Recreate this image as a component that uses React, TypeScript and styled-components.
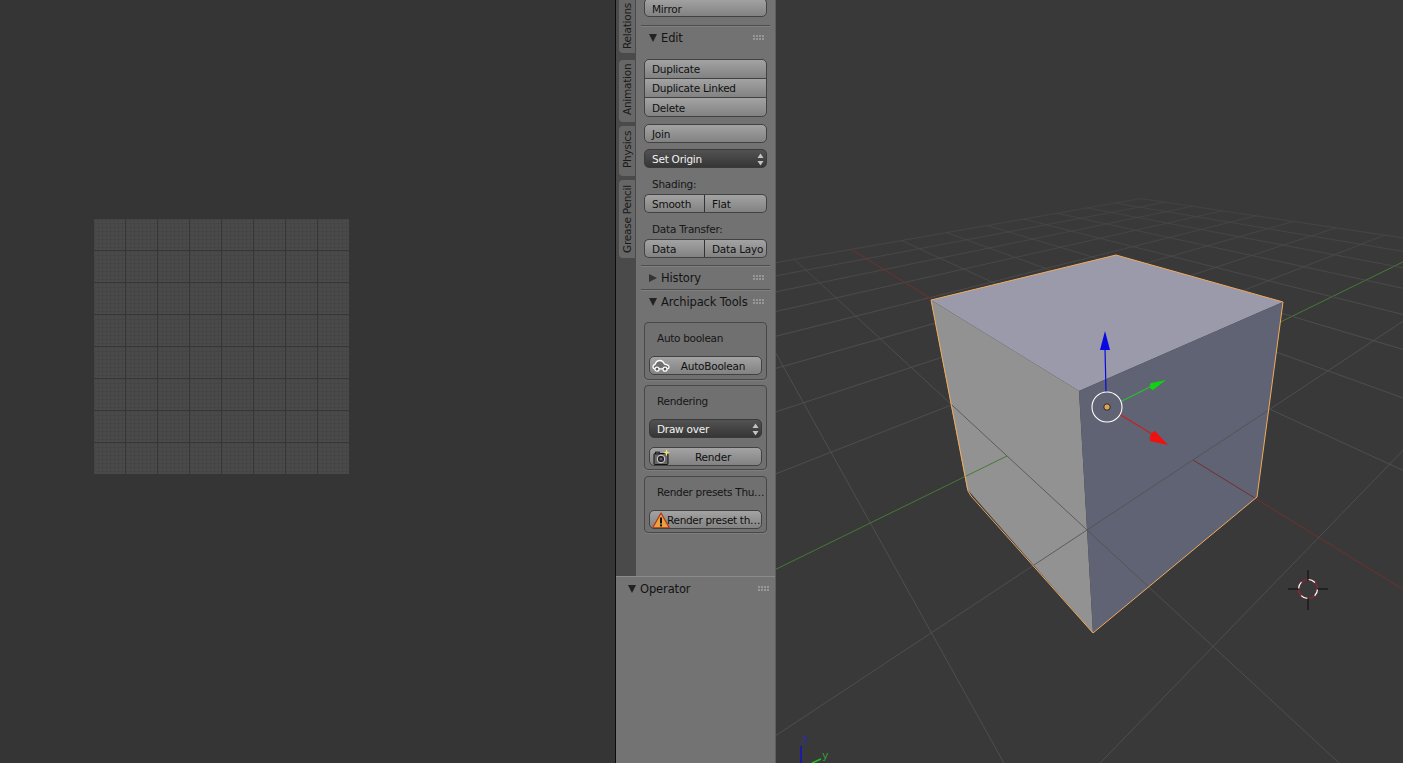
import React, { useMemo } from "react";
import styled, { createGlobalStyle } from "styled-components";

const Global = createGlobalStyle`
  html, body { margin: 0; padding: 0; background: #393939; overflow: hidden; }
  #root { width: 1403px; height: 763px; }
`;

const Screen = styled.div`
  display: flex;
  width: 1403px;
  height: 763px;
  overflow: hidden;
  font-family: "DejaVu Sans", sans-serif;
  font-size: 10.5px;
  letter-spacing: -0.24px;
  color: #101010;
`;

const UvEditor = styled.section`
  width: 616px;
  height: 763px;
  flex: none;
  box-sizing: border-box;
  padding: 219px 0 0 94px;
  background: #353535;
  border-right: 1px solid #0c0c0c;
`;

const UvGrid = styled.div`
  width: 255px;
  height: 255px;
  background-color: #4a4a4a;
  background-image:
    linear-gradient(to right, #373737 1px, transparent 1px),
    linear-gradient(to bottom, #373737 1px, transparent 1px),
    linear-gradient(to right, #454545 1px, transparent 1px),
    linear-gradient(to bottom, #454545 1px, transparent 1px);
  background-size: 32px 32px, 32px 32px, 4px 4px, 4px 4px;
  background-position: 31px 31px, 31px 31px, 0 0, 0 0;
`;

const ToolShelf = styled.aside`
  width: 160px;
  height: 763px;
  flex: none;
  display: flex;
  flex-direction: column;
  background: #727272;
  border-right: 1px solid #5e5e5e;
  box-sizing: border-box;
`;

const Upper = styled.div`
  height: 577px;
  flex: none;
  display: flex;
  overflow: hidden;
`;

const TabColumn = styled.nav`
  width: 20px;
  flex: none;
  background: #4a4a4a;
  box-sizing: border-box;
  padding: 0 1px 0 3px;
  display: flex;
  flex-direction: column;
  align-items: stretch;
  overflow: hidden;
`;

const Tab = styled.div<{ $h: number; $top: number; $lift?: number }>`
  height: ${(p) => p.$h}px;
  margin-top: ${(p) => p.$top}px;
  padding-top: ${(p) => p.$lift ?? 0}px;
  box-sizing: border-box;
  flex: none;
  writing-mode: vertical-rl;
  transform: rotate(180deg);
  display: flex;
  align-items: center;
  justify-content: center;
  background: #676767;
  border-radius: 0 4px 4px 0;
  color: #1a1a1a;
  line-height: 16px;
  white-space: nowrap;
`;

const Scroll = styled.div`
  flex: 1;
  box-sizing: border-box;
  padding: 0 5px;
  overflow: hidden;
`;

const Inner = styled.div<{ $top: number }>`
  margin: ${(p) => p.$top}px 3px 0;
`;

const Divider = styled.div<{ $top?: number }>`
  height: 1px;
  margin-top: ${(p) => p.$top ?? 0}px;
  background: #4e4e4e;
  box-shadow: 0 1px 0 #808080;
`;

const PanelHeader = styled.header<{ $pad?: number; $h?: number }>`
  height: ${(p) => p.$h ?? 24}px;
  display: flex;
  align-items: center;
  gap: 4px;
  padding: 0 5px 0 ${(p) => p.$pad ?? 8}px;
  font-size: 11.5px;
  letter-spacing: -0.13px;
  color: #141414;
`;

const Disclosure = styled.span<{ $open?: boolean }>`
  width: 0;
  height: 0;
  flex: none;
  ${(p) =>
    p.$open
      ? `border-left: 4.5px solid transparent; border-right: 4.5px solid transparent; border-top: 8px solid #222;`
      : `border-top: 4.5px solid transparent; border-bottom: 4.5px solid transparent; border-left: 8px solid #333; margin-right: 0;`}
`;

const HeaderTitle = styled.span`
  flex: 1;
  white-space: nowrap;
`;

const Grip = styled.span`
  width: 12px;
  height: 6px;
  flex: none;
  background-image: radial-gradient(circle at 1px 1px, #b8b8b8 0.7px, transparent 1px);
  background-size: 3px 3px;
  opacity: 0.55;
`;

const Button = styled.div<{ $top?: number; $h?: number }>`
  height: ${(p) => p.$h ?? 19}px;
  margin-top: ${(p) => p.$top ?? 0}px;
  box-sizing: border-box;
  display: flex;
  align-items: center;
  padding: 1px 7px 0;
  border: 1px solid #424242;
  border-radius: 5px;
  background: linear-gradient(#a3a3a3, #828282);
  white-space: nowrap;
  overflow: hidden;
`;

const ClippedButton = styled(Button)`
  padding-top: 3px;
`;

const Stack = styled.div<{ $top: number }>`
  margin-top: ${(p) => p.$top}px;
  display: flex;
  flex-direction: column;
`;

const StackButton = styled(Button)`
  border-radius: 0;
  margin-top: -1px;
  height: 20px;
  padding-top: 0;
  &:first-child { border-radius: 5px 5px 0 0; margin-top: 0; }
  &:last-child { border-radius: 0 0 5px 5px; padding-top: 2px; }
`;

const Split = styled.div<{ $top: number }>`
  margin-top: ${(p) => p.$top}px;
  display: grid;
  grid-template-columns: 60px 1fr;
`;

const SplitButton = styled(Button)`
  border-radius: 0;
  &:first-child { border-radius: 5px 0 0 5px; border-right: none; }
  &:last-child { border-radius: 0 5px 5px 0; border-left: 1px solid #333; padding-right: 0; }
`;

const Select = styled(Button)`
  background: linear-gradient(#525252, #363636);
  border-color: #3a3a3a;
  color: #f2f2f2;
  justify-content: space-between;
  padding-right: 2px;
`;

const Updown = styled.svg`
  width: 7px;
  height: 13px;
  flex: none;
`;

const Label = styled.div<{ $top: number }>`
  margin-top: ${(p) => p.$top}px;
  height: 15px;
  line-height: 15px;
  padding-left: 8px;
  white-space: nowrap;
  color: #161616;
`;

const Box = styled.div<{ $top: number; $h: number }>`
  margin-top: ${(p) => p.$top}px;
  height: ${(p) => p.$h}px;
  box-sizing: border-box;
  border: 1px solid #484848;
  border-radius: 4px;
  background: #707070;
  padding: 0 4px;
  box-shadow: 0 1px 0 #7e7e7e;
`;

const BoxLabel = styled.div<{ $top: number }>`
  margin-top: ${(p) => p.$top}px;
  height: 15px;
  line-height: 15px;
  padding-left: 8px;
  white-space: nowrap;
  letter-spacing: -0.3px;
  color: #161616;
`;

const IconButton = styled(Button)`
  padding: 1px 2px 0 2px;
`;

const IconSlot = styled.svg`
  width: 18px;
  height: 17px;
  flex: none;
`;

const CenterText = styled.span`
  flex: 1;
  text-align: center;
  padding-right: 3px;
`;

const TightText = styled.span`
  flex: 1;
  white-space: nowrap;
  margin-left: -3px;
  letter-spacing: -0.32px;
`;

const Operator = styled.section`
  flex: 1;
  background: #737373;
  border-top: 1px solid #8a8a8a;
  margin-top: -1px;
`;

const Viewport = styled.main`
  flex: 1;
  height: 763px;
  background: #393939;
  overflow: hidden;
`;

const Drawing = styled.svg`
  display: block;
  width: 627px;
  height: 763px;
`;

const AxisLetter = styled.text<{ $c: string }>`
  font-family: "DejaVu Sans", sans-serif;
  font-size: 11px;
  letter-spacing: 0;
  fill: ${(p) => p.$c};
`;

const O = [1107, 407];
const A = [-102.5, -19.7];
const B = [235.3, 12.3];
const G = -0.158;
const H = 0.1344;

const project = (u: number, v: number) => {
  const w = 1 + G * u + H * v;
  return [(A[0] * u + B[0] * v + O[0]) / w, (A[1] * u + B[1] * v + O[1]) / w];
};

type Seg = { a: [number, number]; b: [number, number]; c: string; axis: boolean };

const seg = (a: [number, number], b: [number, number], c: string, axis: boolean): Seg | null => {
  const wa = 1 + G * a[0] + H * a[1];
  const wb = 1 + G * b[0] + H * b[1];
  const min = 0.04;
  if (wa < min && wb < min) return null;
  let p = a;
  let q = b;
  const t = (min - wa) / (wb - wa);
  const cut: [number, number] = [a[0] + (b[0] - a[0]) * t, a[1] + (b[1] - a[1]) * t];
  if (wa < min) p = cut;
  if (wb < min) q = cut;
  return { a: p, b: q, c, axis };
};

const GRID = "url(#gridFade)";
const RED = "#732f2f";
const GREEN = "#467a32";

function buildGrid() {
  const back: (Seg | null)[] = [];
  const front: (Seg | null)[] = [];
  for (let i = -8; i <= 8; i++) {
    const ax = i === 0;
    const cu = ax ? GREEN : GRID;
    const cv = ax ? RED : GRID;
    if (i >= 1) front.push(seg([i, -8], [i, 8], cu, ax));
    else {
      front.push(seg([i, -8], [i, -1], cu, ax));
      back.push(seg([i, ax ? 1 : -1], [i, 8], cu, ax));
    }
    if (i <= -1) front.push(seg([-8, i], [8, i], cv, ax));
    else {
      front.push(seg([1, i], [8, i], cv, ax));
      back.push(seg([-8, i], [ax ? -1 : 1, i], cv, ax));
    }
  }
  return { back: back.filter(Boolean) as Seg[], front: front.filter(Boolean) as Seg[] };
}

const Lines = ({ items }: { items: Seg[] }) => (
  <>
    {items.map((s, k) => {
      const p = project(s.a[0], s.a[1]);
      const q = project(s.b[0], s.b[1]);
      return (
        <line key={k} x1={p[0]} y1={p[1]} x2={q[0]} y2={q[1]} stroke={s.c} strokeWidth={s.axis ? 1 : 0.85} />
      );
    })}
  </>
);

const CarIcon = () => (
  <IconSlot viewBox="0 0 18 17">
    <path
      d="M1 8.5 C1 7.2 1.8 6.8 3 6.4 C4 3.8 5.8 2.5 8 2.5 C10.2 2.5 11.6 4.2 12.6 6.2 C14.8 6.6 17 7.2 17 9 C17 10.2 16.2 10.8 15.4 10.8 L2.6 10.8 C1.6 10.8 1 10 1 8.5 Z"
      fill="#6f6f6f"
      stroke="#fff"
      strokeWidth="1.3"
    />
    <circle cx="5" cy="11.2" r="2" fill="#5a5a5a" stroke="#fff" strokeWidth="1.2" />
    <circle cx="13" cy="11.2" r="2" fill="#5a5a5a" stroke="#fff" strokeWidth="1.2" />
  </IconSlot>
);

const CameraIcon = () => (
  <IconSlot viewBox="0 0 18 17">
    <rect x="2" y="4.5" width="14" height="11" rx="1" fill="#676767" stroke="#111" />
    <rect x="3.5" y="3" width="4" height="2" fill="#555" stroke="#111" strokeWidth="0.7" />
    <circle cx="9" cy="10" r="3.8" fill="#222" stroke="#d8d8d8" />
    <circle cx="9" cy="10" r="1.6" fill="#6d5a78" />
    <path d="M14.5 0 L15.4 3 L18 3.8 L15.4 4.6 L14.5 7.6 L13.6 4.6 L11 3.8 L13.6 3 Z" fill="#f7e66e" />
  </IconSlot>
);

const WarningIcon = () => (
  <IconSlot viewBox="0 0 18 17">
    <path d="M9 1 L17.3 15.8 L0.7 15.8 Z" fill="#e8a33a" stroke="#b8321e" strokeWidth="1.2" strokeLinejoin="round" />
    <rect x="8" y="5.5" width="2" height="6" fill="#111" />
    <rect x="8" y="12.4" width="2" height="2" fill="#111" />
  </IconSlot>
);

const Arrows = () => (
  <Updown viewBox="0 0 7 13">
    <path d="M3.5 0.5 L6.5 5 L0.5 5 Z" fill="#c4c4c4" />
    <path d="M3.5 12.5 L6.5 8 L0.5 8 Z" fill="#c4c4c4" />
  </Updown>
);

export default function App() {
  const grid = useMemo(buildGrid, []);
  return (
    <Screen>
      <Global />
      <UvEditor>
        <UvGrid />
      </UvEditor>
      <ToolShelf>
        <Upper>
          <TabColumn>
            <Tab $h={55} $top={-2}>Relations</Tab>
            <Tab $h={62} $top={7} $lift={3}>Animation</Tab>
            <Tab $h={50} $top={4} $lift={3}>Physics</Tab>
            <Tab $h={78} $top={4}>Grease Pencil</Tab>
          </TabColumn>
          <Scroll>
            <Inner $top={-2}>
              <ClippedButton>Mirror</ClippedButton>
            </Inner>
            <Divider $top={8} />
            <PanelHeader>
              <Disclosure $open />
              <HeaderTitle>Edit</HeaderTitle>
              <Grip />
            </PanelHeader>
            <Inner $top={9}>
              <Stack $top={0}>
                <StackButton>Duplicate</StackButton>
                <StackButton>Duplicate Linked</StackButton>
                <StackButton>Delete</StackButton>
              </Stack>
              <Button $top={7}>Join</Button>
              <Select $top={6}>
                Set Origin
                <Arrows />
              </Select>
              <Label $top={9}>Shading:</Label>
              <Split $top={2}>
                <SplitButton>Smooth</SplitButton>
                <SplitButton>Flat</SplitButton>
              </Split>
              <Label $top={9}>Data Transfer:</Label>
              <Split $top={2}>
                <SplitButton>Data</SplitButton>
                <SplitButton>Data Layo</SplitButton>
              </Split>
            </Inner>
            <Divider $top={7} />
            <PanelHeader $h={23}>
              <Disclosure />
              <HeaderTitle>History</HeaderTitle>
              <Grip />
            </PanelHeader>
            <Divider />
            <PanelHeader>
              <Disclosure $open />
              <HeaderTitle>Archipack Tools</HeaderTitle>
              <Grip />
            </PanelHeader>
            <Inner $top={8}>
              <Box $top={0} $h={58}>
                <BoxLabel $top={8}>Auto boolean</BoxLabel>
                <IconButton $top={10}>
                  <CarIcon />
                  <CenterText>AutoBoolean</CenterText>
                </IconButton>
              </Box>
              <Box $top={5} $h={85}>
                <BoxLabel $top={8}>Rendering</BoxLabel>
                <Select $top={10}>
                  Draw over
                  <Arrows />
                </Select>
                <IconButton $top={9}>
                  <CameraIcon />
                  <CenterText>Render</CenterText>
                </IconButton>
              </Box>
              <Box $top={6} $h={57}>
                <BoxLabel $top={8}>Render presets Thu…</BoxLabel>
                <IconButton $top={10}>
                  <WarningIcon />
                  <TightText>Render preset th…</TightText>
                </IconButton>
              </Box>
            </Inner>
          </Scroll>
        </Upper>
        <Operator>
          <PanelHeader $pad={12} $h={23}>
            <Disclosure $open />
            <HeaderTitle>Operator</HeaderTitle>
            <Grip />
          </PanelHeader>
        </Operator>
      </ToolShelf>
      <Viewport>
        <Drawing viewBox="776 0 627 763">
          <defs>
            <linearGradient id="gridFade" gradientUnits="userSpaceOnUse" x1="0" y1="200" x2="0" y2="330">
              <stop offset="0" stopColor="#434343" />
              <stop offset="1" stopColor="#515151" />
            </linearGradient>
          </defs>
          <Lines items={grid.back} />
          <polygon points="931,300 1116,255 1283,302 1079,391" fill="#9a9aaa" />
          <polygon points="931,300 1079,391 1093,633 967,489" fill="#929292" />
          <polygon points="1079,391 1283,302 1257,497 1093,633" fill="#606373" />
          <Lines items={grid.front} />
          <path
            d="M931 300 L1116 255 L1283 302 L1257 497 L1093 633 L971 496 Q967 491 967 486 Z"
            fill="none"
            stroke="#f2ab5c"
            strokeWidth="1"
          />
          <g>
            <line x1="1106" y1="392" x2="1105" y2="348" stroke="#0a0ae0" strokeWidth="1.2" />
            <path d="M1105 331 L1110 350 L1100 350 Z" fill="#0808e0" />
            <line x1="1122" y1="401" x2="1152" y2="386" stroke="#27c227" strokeWidth="1.2" />
            <path d="M1166 380 L1153 390 C1149 389 1149 385 1151 383 Z" fill="#12d012" />
            <line x1="1119" y1="414" x2="1152" y2="434" stroke="#c82020" strokeWidth="1.2" />
            <path d="M1168 445 L1150 441 C1149 437 1151 433 1155 431 Z" fill="#f01010" />
            <circle cx="1107" cy="407" r="15" fill="none" stroke="#fff" strokeWidth="1.1" />
            <circle cx="1107" cy="407" r="3.2" fill="#d9a25e" stroke="#111" strokeWidth="0.8" />
          </g>
          <g>
            <circle cx="1308" cy="589" r="9.5" fill="none" stroke="#a02030" strokeWidth="1.2" />
            <circle cx="1308" cy="589" r="9.5" fill="none" stroke="#fff" strokeWidth="1.2" strokeDasharray="7.5 7.4" />
            <path d="M1288 589 H1299 M1317 589 H1328 M1308 570 V581 M1308 598 V610" stroke="#0c0c0c" strokeWidth="1" />
          </g>
          <g>
            <line x1="801" y1="746" x2="801" y2="763" stroke="#1414c0" strokeWidth="1.6" />
            <line x1="812" y1="763" x2="821" y2="759" stroke="#20c020" strokeWidth="1.6" />
            <AxisLetter $c="#2a2ab8" x="802" y="743">z</AxisLetter>
            <AxisLetter $c="#30a030" x="822" y="759">y</AxisLetter>
          </g>
        </Drawing>
      </Viewport>
    </Screen>
  );
}
